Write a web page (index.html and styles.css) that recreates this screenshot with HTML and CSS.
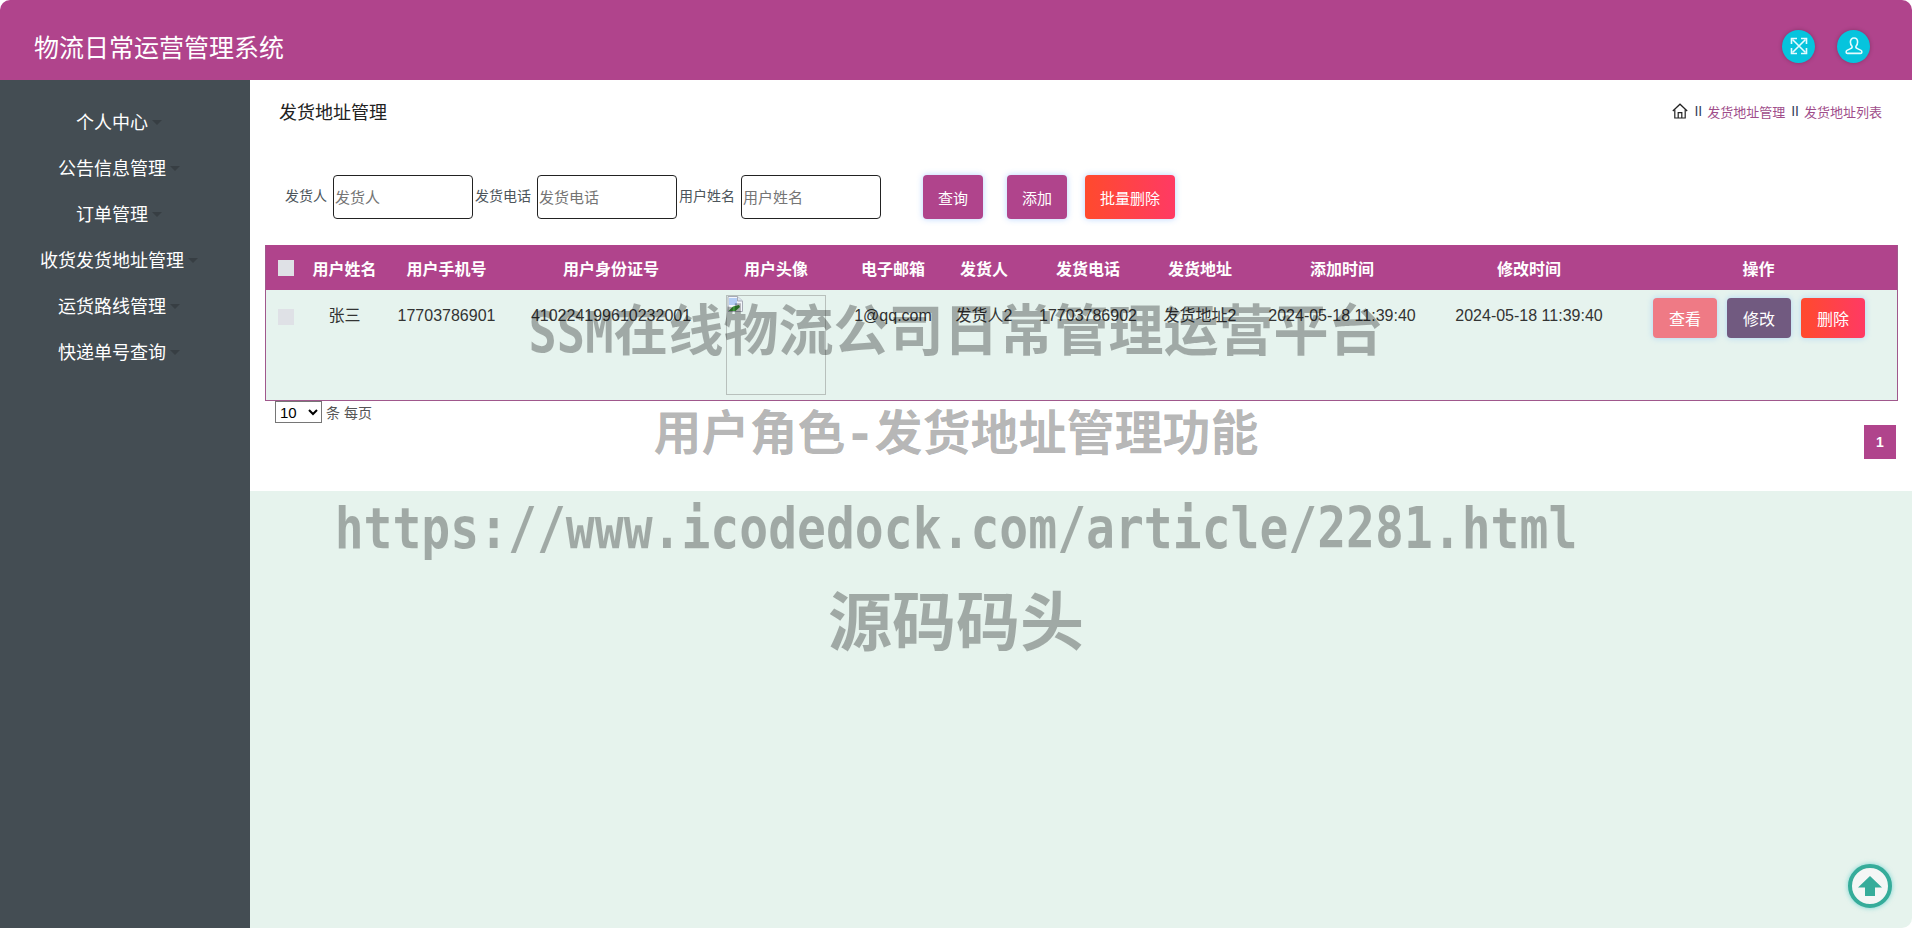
FILE: index.html
```html
<!DOCTYPE html>
<html lang="zh-CN">
<head>
    <meta charset="UTF-8">
    <title>物流日常运营管理系统</title>
    <link rel="stylesheet" href="styles.css">
</head>
<body>
    <div class="app">
        <header class="topbar">
            <div class="brand">物流日常运营管理系统</div>
            <div class="topbar-icons">
                <span class="round-icon">
                    <svg width="20" height="20" viewBox="0 0 20 20" fill="none" stroke="#e6fbff" stroke-width="1.6">
                        <path d="M3.5 3.5L16.5 16.5M16.5 3.5L3.5 16.5"/>
                        <path d="M2.5 8V2.5H8M12 2.5H17.5V8M17.5 12V17.5H12M8 17.5H2.5V12"/>
                    </svg>
                </span>
                <span class="round-icon">
                    <svg width="20" height="20" viewBox="0 0 20 20" fill="none" stroke="#e6fbff" stroke-width="1.6">
                        <path d="M10 2C7.6 2 6.4 3.8 6.4 6C6.4 8 7.2 9.4 8 10.2C8.4 11.2 7.8 12 6.6 12.6L3 14.4C1.8 15 1.8 17.4 3.4 17.4H16.6C18.2 17.4 18.2 15 17 14.4L13.4 12.6C12.2 12 11.6 11.2 12 10.2C12.8 9.4 13.6 8 13.6 6C13.6 3.8 12.4 2 10 2Z"/>
                    </svg>
                </span>
            </div>
        </header>

        <div class="layout">
            <nav class="sidebar">
                <a class="menu-item">个人中心</a>
                <a class="menu-item">公告信息管理</a>
                <a class="menu-item">订单管理</a>
                <a class="menu-item">收货发货地址管理</a>
                <a class="menu-item">运货路线管理</a>
                <a class="menu-item">快递单号查询</a>
            </nav>

            <main class="main">
                <section class="card">
                    <div class="title-row">
                        <span class="page-title">发货地址管理</span>
                        <div class="crumbs">
                            <svg width="16" height="16" viewBox="0 0 16 16" fill="none" stroke="#222" stroke-width="1.2">
                                <path d="M0.8 8L8 1.2L15.2 8"/>
                                <path d="M2.8 6.6V15H13.2V6.6"/>
                                <path d="M6.2 15V9.6H9.8V15"/>
                            </svg>
                            <span class="crumb-sep">II</span>
                            <span class="crumb">发货地址管理</span>
                            <span class="crumb-sep">II</span>
                            <span class="crumb">发货地址列表</span>
                        </div>
                    </div>

                    <form class="filters">
                        <label class="filter-label">发货人</label>
                        <input class="filter-input" placeholder="发货人">
                        <label class="filter-label">发货电话</label>
                        <input class="filter-input" placeholder="发货电话">
                        <label class="filter-label">用户姓名</label>
                        <input class="filter-input" placeholder="用户姓名">
                        <button type="button" class="btn btn-search">查询</button>
                        <button type="button" class="btn btn-add">添加</button>
                        <button type="button" class="btn btn-del">批量删除</button>
                    </form>

                    <table class="data-table">
                        <colgroup>
                            <col class="c-check"><col class="c-name"><col class="c-phone"><col class="c-id">
                            <col class="c-avatar"><col class="c-mail"><col class="c-sender"><col class="c-tel">
                            <col class="c-addr"><col class="c-add"><col class="c-mod"><col class="c-op">
                        </colgroup>
                        <thead>
                            <tr>
                                <th class="check-cell"><input type="checkbox" class="check"></th>
                                <th>用户姓名</th>
                                <th>用户手机号</th>
                                <th>用户身份证号</th>
                                <th>用户头像</th>
                                <th>电子邮箱</th>
                                <th>发货人</th>
                                <th>发货电话</th>
                                <th>发货地址</th>
                                <th>添加时间</th>
                                <th>修改时间</th>
                                <th>操作</th>
                            </tr>
                        </thead>
                        <tbody>
                            <tr>
                                <td class="check-cell"><input type="checkbox" class="check"></td>
                                <td>张三</td>
                                <td>17703786901</td>
                                <td>410224199610232001</td>
                                <td class="avatar-cell">
                                    <div class="avatar">
                                        <svg width="16" height="16" viewBox="0 0 16 16">
                                            <path d="M1 0.5H10.5L15.5 5V15.5H1Z" fill="#f4f6fb" stroke="#a6abb6"/>
                                            <path d="M2 2H10V9H2Z" fill="#b4cdf5"/>
                                            <path d="M1.5 15L6 10.5L12 9L13 11L8.5 15Z" fill="#3f9a3a"/>
                                            <path d="M10.5 0.5V5H15.5" fill="#dde3ee" stroke="#a6abb6"/>
                                        </svg>
                                    </div>
                                </td>
                                <td>1@qq.com</td>
                                <td>发货人2</td>
                                <td>17703786902</td>
                                <td>发货地址2</td>
                                <td>2024-05-18 11:39:40</td>
                                <td>2024-05-18 11:39:40</td>
                                <td class="op-cell">
                                    <div class="op-btns">
                                        <button class="op-btn op-view">查看</button>
                                        <button class="op-btn op-edit">修改</button>
                                        <button class="op-btn op-del">删除</button>
                                    </div>
                                </td>
                            </tr>
                        </tbody>
                    </table>

                    <div class="table-foot">
                        <div class="page-size">
                            <select class="size-select"><option>10</option></select>
                            <span>条 每页</span>
                        </div>
                        <span class="page-num">1</span>
                    </div>
                </section>
            </main>
        </div>

        <a class="to-top">
            <svg width="26" height="26" viewBox="0 0 26 26">
                <path d="M13 3L25 14.5H18V23H8V14.5H1Z" fill="#36ac9a"/>
            </svg>
        </a>

        <!-- watermark sits over the whole page -->
        <div class="watermark">
            <div class="wm-line wm-1"><span class="wm-mono wm-ssm">SSM</span>在线物流公司日常管理运营平台</div>
            <div class="wm-line wm-2">用户角色<span class="wm-mono">-</span>发货地址管理功能</div>
            <div class="wm-line wm-3 wm-mono">https://www.icodedock.com/article/2281.html</div>
            <div class="wm-line wm-4">源码码头</div>
        </div>
    </div>
</body>
</html>
```

FILE: styles.css
```css
* {
    box-sizing: border-box;
}

html, body {
    margin: 0;
    height: 100%;
    background-color: #fff;
    overflow: hidden;
}

body {
    font-family: "Liberation Sans", "Noto Sans CJK SC", sans-serif;
    font-size: 16px;
    color: #333;
}

.app {
    position: relative;
    display: flex;
    flex-direction: column;
    height: 928px;
    overflow: hidden;
    border-radius: 10px 10px 10px 0;
}

.topbar {
    display: flex;
    align-items: center;
    justify-content: space-between;
    flex: 0 0 80px;
    padding: 12px 42px 0 34px;
    background-color: #b0448c;
}

.brand {
    font-size: 25px;
    color: #fff;
}

.topbar-icons {
    display: flex;
    gap: 22px;
}

.round-icon {
    display: flex;
    align-items: center;
    justify-content: center;
    width: 33px;
    height: 33px;
    border-radius: 50%;
    background-color: #06c4dd;
    box-shadow: 0 0 4px rgba(0, 0, 0, 0.25);
}

.layout {
    display: flex;
    flex: 1;
}

.sidebar {
    display: flex;
    flex-direction: column;
    align-items: center;
    flex: 0 0 250px;
    padding: 20px 12px 0 0;
    background-color: #444d53;
}

.menu-item {
    height: 46px;
    line-height: 46px;
    font-size: 18px;
    color: #fff;
    white-space: nowrap;
}

.menu-item::after {
    content: "";
    display: inline-block;
    margin-left: 4px;
    vertical-align: 4px;
    border-top: 5px solid #373e43;
    border-left: 5px solid transparent;
    border-right: 5px solid transparent;
}

.main {
    flex: 1;
    background-color: #e6f3ed;
}

.card {
    height: 411px;
    padding: 0 15px;
    background-color: #fff;
}

.title-row {
    display: flex;
    align-items: center;
    justify-content: space-between;
    height: 62px;
    padding: 0 16px 0 14px;
}

.page-title {
    font-size: 18px;
    color: #222;
}

.crumbs {
    display: flex;
    align-items: center;
    font-size: 13px;
    color: #a04d8a;
}

.crumb-sep {
    margin: 0 5px 0 6px;
    font-size: 14px;
    color: #33415c;
}

.filters {
    display: flex;
    align-items: center;
    height: 44px;
    margin-top: 33px;
    padding-left: 20px;
}

.filter-label {
    margin-right: 6px;
    margin-top: -4px;
    font-size: 14px;
    color: #4d555b;
}

.filter-input {
    width: 140px;
    height: 44px;
    margin-right: 2px;
    padding: 0 1px;
    font-family: inherit;
    font-size: 15px;
    color: #222;
    border: 1px solid #222;
    border-radius: 4px;
    background-color: #fff;
}

.filter-input::placeholder {
    color: #757575;
}

.btn {
    height: 44px;
    padding: 0;
    font-family: inherit;
    font-size: 15px;
    color: #fff;
    border: none;
    border-radius: 4px;
    background-color: #b0448c;
    box-shadow: 0 0 6px rgba(90, 160, 255, 0.45);
}

.btn-search {
    width: 60px;
    margin-left: 40px;
}

.btn-add {
    width: 60px;
    margin-left: 24px;
}

.btn-del {
    width: 90px;
    margin-left: 18px;
    background: linear-gradient(90deg, #ff4a2d, #ff3a64);
}

.data-table {
    width: 1632px;
    height: 156px;
    margin-top: 26px;
    table-layout: fixed;
    border-collapse: separate;
    border-spacing: 0;
    border: 1px solid #a0588c;
    border-top: none;
    background-color: #e6f3ee;
}

.c-check { width: 40px; }
.c-name { width: 77px; }
.c-phone { width: 127px; }
.c-id { width: 202px; }
.c-avatar { width: 128px; }
.c-mail { width: 106px; }
.c-sender { width: 76px; }
.c-tel { width: 132px; }
.c-addr { width: 92px; }
.c-add { width: 192px; }
.c-mod { width: 182px; }
.c-op { width: 277px; }

.data-table th {
    height: 45px;
    padding: 0;
    font-size: 16px;
    font-weight: bold;
    color: #fff;
    background-color: #b0448c;
}

.data-table td {
    height: 110px;
    padding: 14px 0 0;
    vertical-align: top;
    text-align: center;
    line-height: 24px;
    color: #333;
    white-space: nowrap;
}

.check {
    display: block;
    width: 16px;
    height: 16px;
    margin: 0 0 0 12px;
    appearance: none;
    border: none;
    background-color: #dfe1e6;
}

.data-table td.check-cell {
    padding-top: 19px;
}

.data-table td.avatar-cell {
    padding: 5px 0 0 14px;
}

.avatar {
    width: 100px;
    height: 100px;
    line-height: 0;
    text-align: left;
    border: 1px solid #b8c0bc;
}

.data-table td.op-cell {
    padding-top: 8px;
}

.op-btns {
    display: flex;
    gap: 10px;
    padding-left: 33px;
}

.op-btn {
    width: 64px;
    height: 40px;
    padding: 0;
    font-family: inherit;
    font-size: 16px;
    color: #fff;
    border: none;
    border-radius: 4px;
    box-shadow: 0 0 6px rgba(90, 170, 255, 0.4);
}

.op-view {
    background-color: #ef7a85;
}

.op-edit {
    background-color: #715a80;
}

.op-del {
    background: linear-gradient(90deg, #ff4a2d, #ff3a64);
}

.table-foot {
    display: flex;
    justify-content: space-between;
    padding: 0 2px 0 10px;
}

.page-size {
    display: flex;
    align-items: center;
    gap: 4px;
    height: 22px;
    font-size: 14px;
    color: #555;
}

.size-select {
    width: 47px;
    height: 22px;
    font-family: inherit;
    font-size: 15px;
    background-color: #fff;
}

.page-num {
    width: 32px;
    height: 34px;
    margin-top: 24px;
    line-height: 34px;
    text-align: center;
    font-size: 14px;
    font-weight: bold;
    color: #fff;
    background-color: #b0448c;
}

.to-top {
    position: absolute;
    right: 20px;
    bottom: 20px;
    display: flex;
    align-items: center;
    justify-content: center;
    width: 44px;
    height: 44px;
    border: 4px solid #36ac9a;
    border-radius: 50%;
    background-color: #f4f6f5;
    box-shadow: 0 0 5px rgba(40, 190, 190, 0.6);
}

.watermark {
    position: absolute;
    top: 0;
    left: 0;
    width: 100%;
    height: 100%;
    pointer-events: none;
    text-align: center;
    font-family: "Liberation Sans", "Noto Sans CJK SC", sans-serif;
    font-weight: bold;
    font-size: 48px;
    color: rgba(0, 0, 0, 0.3);
    white-space: nowrap;
}

.wm-mono {
    font-family: "DejaVu Sans Mono", monospace;
}

.wm-line {
    position: absolute;
    left: 0;
    width: 100%;
    line-height: 60px;
}

.wm-ssm {
    display: inline-block;
    font-size: 47px;
    transform: scaleY(1.2);
}

.wm-1 { top: 301px; font-size: 55px; }
.wm-2 { top: 403px; }
.wm-3 { top: 498px; transform: scaleY(1.2); }
.wm-4 { top: 591px; font-size: 64px; line-height: 64px; }
```
